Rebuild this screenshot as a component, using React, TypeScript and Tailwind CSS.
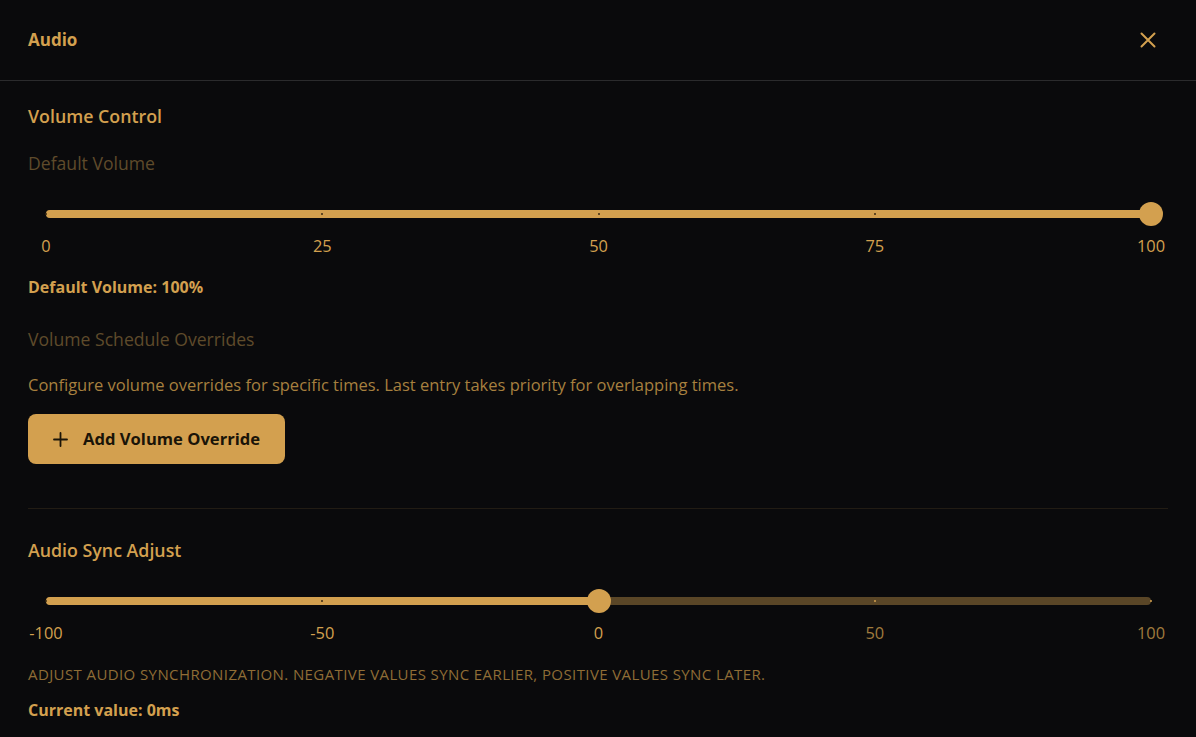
import React from "react";

const GOLD = "#d3a04f";

function Slider({ value, min, max, marks, labels }: { value: number; min: number; max: number; marks: number[]; labels: string[] }) {
  const pct = ((value - min) / (max - min)) * 100;
  return (
    <div>
      <div className="ml-[18px] mr-[17px] relative h-[26px] flex items-center">
        <div className="w-full h-[8px] rounded-full bg-[#5a4627]" />
        <div className="absolute left-0 h-[8px] rounded-full bg-[#d3a04f]" style={{ width: `${pct}%` }} />
        {marks.map((m) => {
          const p = ((m - min) / (max - min)) * 100;
          const active = p <= pct;
          return (
            <div
              key={m}
              className={`absolute w-[2px] h-[2px] rounded-full ${active ? "bg-[#3a2a12]" : "bg-[#d3a04f]"}`}
              style={{ left: `calc(${p}% - 1px)` }}
            />
          );
        })}
        <div className="absolute w-[24px] h-[24px] rounded-full bg-[#d3a04f]" style={{ left: `calc(${pct}% - 12px)` }} />
      </div>
      <div className="ml-[18px] mr-[17px] relative h-[24px] mt-[7px]">
        {marks.map((m, i) => {
          const p = ((m - min) / (max - min)) * 100;
          const active = p <= pct;
          return (
            <span
              key={m}
              className={`absolute top-0 -translate-x-1/2 text-[16.4px] leading-[24px] ${active ? "text-[#d3a04f]" : "text-[#a07b3d]"}`}
              style={{ left: `${p}%` }}
            >
              {labels[i]}
            </span>
          );
        })}
      </div>
    </div>
  );
}

export default function App() {
  return (
    <div className="min-h-screen w-full bg-[#0a0a0c] font-['Open_Sans',sans-serif] text-[#d3a04f]">
      <div className="h-[81px] px-7 flex items-center justify-between border-b border-[#2b2b2d]">
        <span className="text-[17px] font-bold">Audio</span>
        <svg width="16" height="16" viewBox="0 0 16 16" fill="none" stroke={GOLD} strokeWidth="2" strokeLinecap="round" className="mr-[12px]">
          <path d="M1.5 1.5L14.5 14.5M14.5 1.5L1.5 14.5" />
        </svg>
      </div>
      <div className="px-7 pt-[21px]">
        <div className="text-[17.8px] leading-[28px] font-semibold">Volume Control</div>
        <div className="mt-[21px] text-[17.6px] leading-[24px] text-[#5f4b2b]">Default Volume</div>
        <div className="mt-[26px]">
          <Slider value={100} min={0} max={100} marks={[0, 25, 50, 75, 100]} labels={["0", "25", "50", "75", "100"]} />
        </div>
        <div className="mt-[17px] text-[16px] leading-[24px] font-bold">Default Volume: 100%</div>
        <div className="mt-[28px] text-[17.6px] leading-[24px] text-[#5f4b2b]">Volume Schedule Overrides</div>
        <div className="mt-[22px] text-[16.5px] leading-[24px] text-[#a7803f]">
          Configure volume overrides for specific times. Last entry takes priority for overlapping times.
        </div>
        <button className="mt-[17px] h-[50px] px-[25px] rounded-[8px] bg-[#d3a04f] text-[#1a1408] flex items-center gap-[15px] text-[16.6px] font-bold">
          <svg width="15" height="15" viewBox="0 0 15 15" fill="none" stroke="#1a1408" strokeWidth="1.8" strokeLinecap="round">
            <path d="M7.5 1v13M1 7.5h13" />
          </svg>
          Add Volume Override
        </button>
        <div className="mt-[44px] h-px bg-[#221c14]" />
        <div className="mt-[27px] text-[17.8px] leading-[28px] font-semibold">Audio Sync Adjust</div>
        <div className="mt-[24px]">
          <Slider value={0} min={-100} max={100} marks={[-100, -50, 0, 50, 100]} labels={["-100", "-50", "0", "50", "100"]} />
        </div>
        <div className="mt-[19px] text-[15px] leading-[20px] tracking-[0.4px] uppercase text-[#8f6d36]">
          Adjust audio synchronization. Negative values sync earlier, positive values sync later.
        </div>
        <div className="mt-[14px] text-[16px] leading-[24px] font-bold">Current value: 0ms</div>
      </div>
    </div>
  );
}
